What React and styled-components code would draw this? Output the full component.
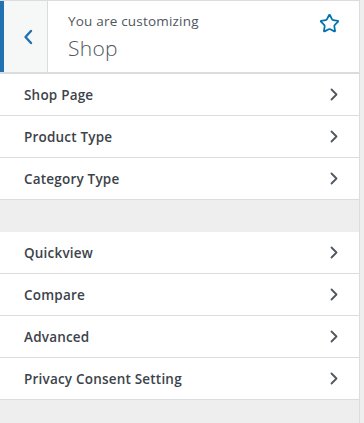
import styled, { createGlobalStyle } from "styled-components";
import { Star } from "lucide-react";

const GlobalStyle = createGlobalStyle`
  html, body {
    margin: 0;
    padding: 0;
    background: #eeeeee;
    font-family: "Open Sans", "Liberation Sans", sans-serif;
  }
  * { box-sizing: border-box; }
`;

const sections = [
  ["Shop Page", "Product Type", "Category Type"],
  ["Quickview", "Compare", "Advanced", "Privacy Consent Setting"],
];

const Chevron = () => (
  <svg width="8" height="13" viewBox="0 0 8 13" fill="none">
    <polyline points="1.5,1.5 6.5,6.5 1.5,11.5" stroke="#50575e" strokeWidth="1.8" strokeLinecap="round" strokeLinejoin="round" />
  </svg>
);

const BackArrow = () => (
  <svg width="10" height="16" viewBox="0 0 10 16" fill="none">
    <polyline points="8,2 2.5,8 8,14" stroke="#2271b1" strokeWidth="2.4" strokeLinecap="round" strokeLinejoin="round" />
  </svg>
);

const App = () => {
  return (
    <Panel>
      <GlobalStyle />
      <Header>
        <BackButton>
          <BackArrow />
        </BackButton>
        <TitleBlock>
          <Kicker>You are customizing</Kicker>
          <Title>Shop</Title>
        </TitleBlock>
        <StarButton>
          <Star size={21} strokeWidth={2} color="#0073aa" />
        </StarButton>
      </Header>
      {sections.map((items, i) => (
        <Section key={i}>
          {items.map((label) => (
            <Row key={label}>
              <Label>{label}</Label>
              <Chevron />
            </Row>
          ))}
        </Section>
      ))}
    </Panel>
  );
};
export default App;

const Panel = styled.div`
  width: 360px;
  min-height: 423px;
  background: #eeeeee;
  border-right: 1px solid #dcdcde;
`;

const Header = styled.div`
  display: flex;
  height: 74px;
  background: #fff;
  border-top: 1px solid #dcdcde;
  border-bottom: 2px solid #dcdcde;
`;

const BackButton = styled.div`
  width: 48px;
  display: flex;
  align-items: center;
  justify-content: center;
  padding-left: 4px;
  background: #f6f7f7;
  border-left: 4px solid #2271b1;
  border-right: 1px solid #dcdcde;
`;

const TitleBlock = styled.div`
  flex: 1;
  padding: 11px 0 0 20px;
  color: #50575e;
`;

const Kicker = styled.div`
  font-size: 13.5px;
  letter-spacing: 0.2px;
  line-height: 18px;
`;

const Title = styled.div`
  font-size: 21px;
  line-height: 30px;
  margin-top: 3px;
  font-weight: 300;
  letter-spacing: 0.3px;
`;

const StarButton = styled.div`
  padding: 12px 19px 0 0;
`;

const Section = styled.div`
  margin-bottom: 32px;
`;

const Row = styled.div`
  display: flex;
  align-items: center;
  justify-content: space-between;
  height: 42px;
  padding: 0 21px 0 24px;
  background: #fff;
  border-bottom: 1px solid #dcdcde;
`;

const Label = styled.span`
  font-size: 13.5px;
  letter-spacing: 0.2px;
  font-weight: 600;
  color: #3c434a;
`;
